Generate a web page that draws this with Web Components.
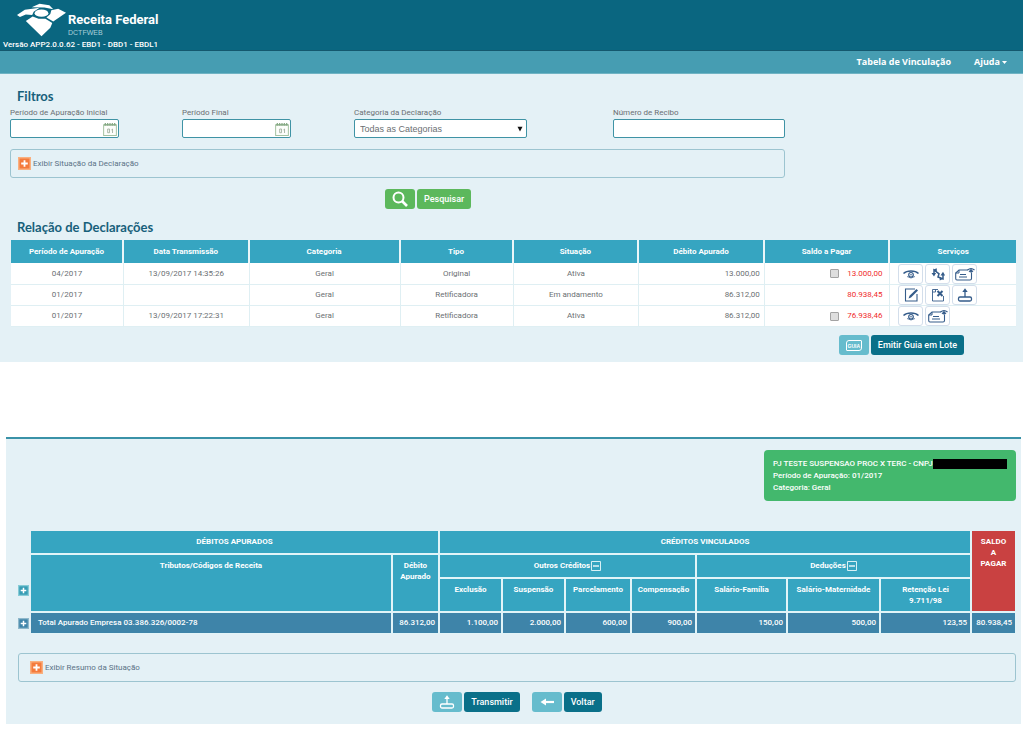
<!DOCTYPE html>
<html lang="pt-BR">
<head>
<meta charset="utf-8">
<title>Receita Federal - DCTFWEB</title>
<style>
  body { margin: 0; background: #fff; color: #6b6f73; font: 8px/12px Roboto, "Noto Sans", sans-serif; }
</style>
</head>
<body>
<dctf-app></dctf-app>
<script>
const ICONS = {
  search: ['0 0 16 16', '<circle cx="6.500" cy="6.500" r="5" fill="none" stroke="currentColor" stroke-width="2"/><path d="M10 10l5 5" stroke="currentColor" stroke-width="2.600"/>'],
  calendar: ['0 0 15 15', '<rect x=".7" y="3" width="13.600" height="11.500" fill="#fdfefb" stroke="#9fbf9c"/><path d="M1 3h13M2.500 1v3M5 1v3M7.500 1v3M10 1v3M12.500 1v3" stroke="#86a984" stroke-width="1.300"/><path d="M5 7.500h2v4H5zM9 8.500l1.200-1v4.300" fill="none" stroke="#9cab9b" stroke-width=".9"/>'],
  plus: ['0 0 13 13', '<path d="M0 0h13v13H0z" fill="var(--edge, #f9b07f)"/><path d="M1.500 1.500h10v10h-10z" fill="var(--face, #f47b3c)"/><path d="M6.500 3.200v6.600M3.200 6.500h6.600" stroke="#fff" stroke-width="1.800"/>'],
  minus: ['0 0 10 10', '<path d="M.5.5h9v9h-9z" fill="none" stroke="#d8f0f5"/><path d="M2 5h6" stroke="#fff" stroke-width="1.300"/>'],
  eye: ['0 0 18 14', '<path d="M1.500 6.500C5 3.200 13 3.200 16.500 6.500" fill="none" stroke="currentColor" stroke-width="1.500"/><path d="M5 9.500Q9 12.500 13 9.500" fill="none" stroke="currentColor" stroke-width=".7"/><circle cx="9" cy="7.800" r="2.300" fill="none" stroke="currentColor" stroke-width="1.200"/><circle cx="9" cy="7.800" r=".8" fill="currentColor"/>'],
  sync: ['0 0 18 14', '<path d="M5 8V3l5 3.800-1 3.200L14 12V7" fill="none" stroke="currentColor" stroke-width="1.500"/><path d="M2.500 6h4.600L5 9.500zM11.500 8.500h4.600L14 4.700zM7.800 1.200v4L4.600 2.600zM10.700 13.400V9.500l3.300 2.400z" fill="currentColor"/>'],
  guide: ['0 0 20 14', '<path d="M16.500 5.500v6q0 1.500-1.500 1.500H2q-1.300 0-1.300-1.500V6L4 3h9" fill="none" stroke="currentColor" stroke-width="1.100"/><path d="M.8 6H4V3M5 7.500h6M4 10h8" fill="none" stroke="currentColor"/><path d="M12.500 3q3.500-2.800 7 0M14 3.800q2 2 4 0" fill="none" stroke="currentColor" stroke-width="1.200"/><circle cx="16" cy="3.500" r="1.200" fill="currentColor"/>'],
  edit: ['0 0 18 14', '<path d="M13 1H3.500v12H15V6" fill="none" stroke="currentColor" stroke-width="1.100"/><path d="M6.500 10.500l1-2.800 7-6.700 1.500 1.500-7 6.900z" fill="currentColor"/>'],
  remove: ['0 0 18 14', '<path d="M9 1.500H3.500v11.500h11V8M3.500 4h3V1.500" fill="none" stroke="currentColor" stroke-width=".9"/><path d="M8.500 3l5 5M13.500 3l-5 5" stroke="currentColor" stroke-width="2"/>'],
  send: ['0 0 18 14', '<rect x="2.500" y="9" width="13" height="4" rx="1.500" fill="none" stroke="currentColor" stroke-width="1.300"/><path d="M9 9V3" stroke="currentColor" stroke-width="1.300"/><path d="M6.300 4L9 .3 11.700 4z" fill="currentColor"/>'],
  back: ['0 0 14 10', '<path d="M4 5h10" stroke="currentColor" stroke-width="2.200"/><path d="M.5 5L6 1.500v7z" fill="currentColor"/>'],
  caret: ['0 0 6 6', '<path d="M.5.8h5L3 5.500z" fill="#111"/>'],
  down: ['0 0 5 3', '<path d="M0 0h5L2.500 3z" fill="currentColor"/>'],
  eagle: ['0 0 50 34', '<g fill="#fff"><path d="M0 12L8 6.500 23 4.500 17 8.500 15.500 12 9 11.500 3 14z"/><path d="M15 4L23 .5 33 2 37 6 28 4.200z"/><path d="M35 7L42 5.500 50 9.500 37 18.500 30 14.500 34 11z"/><path d="M9 18L16 13.500 22 15.800 29 15.800 36 20 34 25 25 33.500z"/><ellipse cx="25" cy="10" rx="7" ry="3.800"/></g>']
};

class DctfElement extends HTMLElement {
  connectedCallback() {
    if (this.shadowRoot) return;
    this.attachShadow({ mode: 'open' }).innerHTML = `<style>*{box-sizing:border-box}${this.css()}</style>${this.html()}`;
  }
  attr(name) { return this.getAttribute(name) || ''; }
  css() { return ''; }
  html() { return '<slot></slot>'; }
}
const define = (name, css, html) => customElements.define(name, class extends DctfElement {
  css() { return typeof css === 'function' ? css(this) : css; }
  html() { return typeof html === 'function' ? html(this) : html; }
});

define('dctf-icon', ':host{display:inline-flex;flex:none}svg{width:100%;height:100%;display:block}',
  el => { const [box, art] = ICONS[el.attr('name')]; return `<svg viewBox="${box}" aria-hidden="true">${art}</svg>`; });

define('dctf-header', `
  :host{display:block;box-sizing:border-box;background:#0a6680;color:#fff;border-bottom:1px solid #14586e;min-height:51px;padding:3px 3px 0}
  .brand{display:flex;gap:2px;padding-left:14px;height:37px}
  dctf-icon{width:49px;height:34px}
  strong{display:block;font-size:13px;line-height:14px;margin-top:10px}
  small{display:block;font:7px/12px "Liberation Sans",sans-serif;color:#a9d0da}
  p{margin:0;line-height:10px;font-weight:500}`,
  `<div class="brand"><dctf-icon name="eagle"></dctf-icon><div><strong>Receita Federal</strong><small>DCTFWEB</small></div></div>
   <p>Versão APP2.0.0.62 - EBD1 - DBD1 - EBDL1</p>`);

define('dctf-nav', `
  :host{display:block;background:#469db2;border-bottom:1px solid #6fb3c3}
  nav{display:flex;justify-content:flex-end;align-items:center;gap:23px;height:22px;padding-right:16px}
  a{color:#fff;text-decoration:none;font-weight:700;font-size:9px;font-family:"Open Sans",sans-serif;display:flex;align-items:center;gap:2px}
  dctf-icon{width:5px;height:3px}`,
  `<nav><a href="#vinculacao">Tabela de Vinculação</a><a href="#ajuda">Ajuda<dctf-icon name="down"></dctf-icon></a></nav>`);

define('dctf-field', `
  :host{display:block}
  label{display:block;line-height:10px;margin-bottom:1px}
  .box{display:grid;align-items:center}
  .box.date{width:109px}
  .box>*{grid-area:1/1}
  input,select{appearance:none;width:100%;height:19px;margin:0;padding:0 5px;background:#fff;border:1px solid #3f93a5;border-radius:2px;color:#6b6f73;font:9px "Liberation Sans",sans-serif}
  dctf-icon{justify-self:end;margin-right:2px;width:14px;height:14px;pointer-events:none}
  dctf-icon[name=caret]{width:6px;height:6px;margin-right:4px}`,
  el => {
    const type = el.attr('type');
    const control = type === 'select'
      ? `<select id="f"><option>${el.attr('value')}</option></select><dctf-icon name="caret"></dctf-icon>`
      : `<input id="f" type="text">${type === 'date' ? '<dctf-icon name="calendar"></dctf-icon>' : ''}`;
    return `<label for="f">${el.attr('label')}</label><div class="box ${type}">${control}</div>`;
  });

define('dctf-expander', `
  :host{display:block;border:1px solid #9cc4d0;border-radius:3px;padding:var(--expander-padding,7px)}
  button{display:flex;align-items:center;gap:2px;height:13px;margin:0;padding:0;border:0;background:none;color:#5b7186;font:inherit}
  dctf-icon{width:13px;height:13px}`,
  '<button type="button" aria-expanded="false"><dctf-icon name="plus"></dctf-icon><slot></slot></button>');

define('dctf-action', `
  :host{display:inline-block}
  button{display:flex;gap:2px;margin:0;padding:0;border:0;background:none;color:#fff;font:500 9px/20px Roboto,sans-serif}
  span{display:flex;align-items:center;justify-content:center;height:20px;border-radius:3px}
  .pic{width:30px;background:#66bccd}
  .txt{padding:0 7px;background:#0a7089}
  dctf-icon{width:18px;height:14px}
  dctf-icon[name=search]{width:16px;height:16px}
  dctf-icon[name=back]{width:14px;height:10px}
  b{font:700 5px/8px "Liberation Sans",sans-serif;border:1px solid #fff;border-radius:3px 1px;padding:1px 1px 0}
  :host([tone=green]) span{background:#5cb85c}`,
  el => `<button type="button"><span class="pic">${el.attr('icon') === 'guia' ? '<b>GUIA</b>' : `<dctf-icon name="${el.attr('icon')}"></dctf-icon>`}</span><span class="txt"><slot></slot></span></button>`);

const rows = [
  ['04/2017', '13/09/2017 14:35:26', 'Original', 'Ativa', '13.000,00', '13.000,00', true, 'eye sync guide'],
  ['01/2017', '', 'Retificadora', 'Em andamento', '86.312,00', '80.938,45', false, 'edit remove send'],
  ['01/2017', '13/09/2017 17:22:31', 'Retificadora', 'Ativa', '86.312,00', '76.938,46', true, 'eye guide']
];
const titles = { eye: 'Visualizar', sync: 'Retificar', guide: 'Emitir guia', edit: 'Editar', remove: 'Excluir', send: 'Transmitir' };
define('dctf-declarations', `
  :host{display:block}
  table{width:100%;table-layout:fixed;border-collapse:separate;border-spacing:0;text-align:center}
  .n{width:113px}.g{width:151px}
  th{height:23px;padding:0;background:#36a5c1;color:#fff;border-right:2px solid #eaf6f9}
  td{height:21px;padding:0;background:#fff;border-right:1px solid #dfeff3;border-bottom:1px solid #dfeff3}
  tr>:last-child{border-right:0}
  tbody tr:first-child td{height:22px}
  td.num{text-align:right;padding-right:4px}
  td.due{color:#f02c2c;padding-right:7px}
  .pay,.tools{display:flex;align-items:center}
  .pay{justify-content:flex-end;gap:8px}
  input{appearance:none;width:9px;height:9px;margin:0;border:1px solid #a3a3a3;border-radius:1px;background:#dedede}
  .tools{gap:2px;padding-left:8px}
  .tools button{display:flex;align-items:center;justify-content:center;width:25px;height:20px;margin:0;padding:0;border:1px solid #d3deeb;border-radius:3px;background:#fff;color:#355c8a}
  dctf-icon{width:18px;height:14px}
  dctf-icon[name=guide]{width:20px}`,
  `<table><colgroup><col class="n"><col><col class="g"><col class="n"><col><col><col><col></colgroup>
   <thead><tr>${['Período de Apuração', 'Data Transmissão', 'Categoria', 'Tipo', 'Situação', 'Débito Apurado', 'Saldo a Pagar', 'Serviços'].map(t => `<th scope="col">${t}</th>`).join('')}</tr></thead>
   <tbody>${rows.map(r => `<tr><td>${r[0]}</td><td>${r[1]}</td><td>Geral</td><td>${r[2]}</td><td>${r[3]}</td><td class="num">${r[4]}</td>
     <td class="num due"><div class="pay">${r[6] ? `<input type="checkbox" aria-label="Selecionar ${r[5]}">` : ''}<span>${r[5]}</span></div></td>
     <td><div class="tools">${r[7].split(' ').map(i => `<button type="button" aria-label="${titles[i]}"><dctf-icon name="${i}"></dctf-icon></button>`).join('')}</div></td></tr>`).join('')}</tbody></table>`);

define('dctf-summary', `
  :host{display:block;box-sizing:border-box;width:252px;padding:8px 9px 7px;border-radius:4px;background:#43b86d;color:#fff;font-weight:500}
  p{margin:0;display:flex;align-items:center;white-space:nowrap}
  i{flex:1;height:10px;background:#000}`,
  '<p>PJ TESTE SUSPENSAO PROC X TERC - CNPJ<i></i></p><p>Período de Apuração: 01/2017</p><p>Categoria: Geral</p>');

const credits = ['Exclusão', 'Suspensão', 'Parcelamento', 'Compensação', 'Salário-Família', 'Salário-Maternidade', 'Retenção Lei 9.711/98'];
const widths = [13, 0, 47, 63, 63, 66, 65, 91, 93, 91, 44];
const toggle = label => `<button type="button" aria-label="${label}"><dctf-icon name="plus"></dctf-icon></button>`;
define('dctf-credits', `
  :host{display:block}
  table{width:100%;table-layout:fixed;border-collapse:separate;border-spacing:0;color:#fff;line-height:11px}
  th,.total td{padding:5px 3px 0;vertical-align:top;background:#36a5c1;border-right:2px solid #e1f4f8;border-bottom:2px solid #e1f4f8;text-align:center}
  .r{height:24px}.s{height:34px}
  .total td,.total th{height:21px;padding:0 3px 1px;vertical-align:middle;background:#3e84a9;text-align:right;font-weight:500;border-bottom-width:1px}
  .total th{text-align:left;padding-left:7px}
  thead .due{background:#c94141}
  tr>.due,.total td:last-child{border-right-width:1px}
  tr>td.tog{padding:0;border:0;background:none;text-align:left;vertical-align:middle}
  thead td.tog{vertical-align:bottom;padding-bottom:17px}
  button{display:block;margin:0;padding:0;border:0;background:none;line-height:0}
  .tog dctf-icon{width:11px;height:11px;--edge:#86cbd6;--face:#379db5}
  .total .tog dctf-icon{--edge:#8fb8cb;--face:#3e84a9}
  .grp{display:flex;justify-content:center;align-items:center;gap:1px}
  .grp dctf-icon{width:10px;height:10px}`,
  `<table><colgroup>${widths.map(w => `<col${w ? ` style="width:${w}px"` : ''}>`).join('')}</colgroup>
   <thead><tr class="r"><td class="tog" rowspan="3">${toggle('Expandir todos')}</td><th colspan="2">DÉBITOS APURADOS</th><th colspan="7">CRÉDITOS VINCULADOS</th><th class="due" rowspan="3">SALDO<br>A<br>PAGAR</th></tr>
   <tr class="r"><th rowspan="2">Tributos/Códigos de Receita</th><th rowspan="2">Débito Apurado</th>
   <th colspan="4"><div class="grp">Outros Créditos<button type="button" aria-label="Recolher créditos"><dctf-icon name="minus"></dctf-icon></button></div></th>
   <th colspan="3"><div class="grp">Deduções<button type="button" aria-label="Recolher deduções"><dctf-icon name="minus"></dctf-icon></button></div></th></tr>
   <tr class="s">${credits.map(c => `<th>${c.replace('Lei ', 'Lei<br>')}</th>`).join('')}</tr></thead>
   <tbody><tr class="total"><td class="tog">${toggle('Expandir empresa')}</td><th scope="row">Total Apurado Empresa 03.386.326/0002-78</th>${['86.312,00', '1.100,00', '2.000,00', '600,00', '900,00', '150,00', '500,00', '123,55', '80.938,45'].map(v => `<td>${v}</td>`).join('')}</tr></tbody></table>`);

define('dctf-app', `
  :host{display:block}
  h2{margin:0;padding-left:7px;font:700 13px/16px Lato,sans-serif;color:#17607a}
  .list{background:#e4f1f6;padding:14px 7px 7px 10px}
  form{display:grid;grid-template-columns:172fr 172fr 259fr 172fr 231fr;margin:4px 0 10px}
  form dctf-field[type=select]{padding-right:86px}
  form dctf-expander{grid-column:1/5;margin:11px 0}
  form dctf-action{grid-column:3/6;padding-left:31px}
  dctf-declarations{margin:5px 0 8px 1px}
  .batch{display:flex;justify-content:flex-end;padding-right:52px}
  .detail{background:#e4f1f6;border-top:2px solid #3a92a8;margin:75px 2px 0 6px;padding:11px 5px 12px 12px}
  .detail dctf-summary{margin-left:auto}
  dctf-credits{margin:30px 0 19px}
  .detail dctf-expander{--expander-padding:7px 11px}
  .foot{display:flex;justify-content:center;gap:12px;margin-top:10px}`,
  `<dctf-header></dctf-header><dctf-nav></dctf-nav>
   <main><section class="list"><h2>Filtros</h2>
   <form>
     <dctf-field type="date" label="Período de Apuração Inicial"></dctf-field>
     <dctf-field type="date" label="Período Final"></dctf-field>
     <dctf-field type="select" label="Categoria da Declaração" value="Todas as Categorias"></dctf-field>
     <dctf-field label="Número de Recibo"></dctf-field>
     <dctf-expander>Exibir Situação da Declaração</dctf-expander>
     <dctf-action tone="green" icon="search">Pesquisar</dctf-action>
   </form>
   <h2>Relação de Declarações</h2>
   <dctf-declarations></dctf-declarations>
   <div class="batch"><dctf-action icon="guia">Emitir Guia em Lote</dctf-action></div></section>
   <section class="detail"><dctf-summary></dctf-summary><dctf-credits></dctf-credits>
   <dctf-expander>Exibir Resumo da Situação</dctf-expander>
   <div class="foot"><dctf-action icon="send">Transmitir</dctf-action><dctf-action icon="back">Voltar</dctf-action></div></section></main>`);
</script>
</body>
</html>
